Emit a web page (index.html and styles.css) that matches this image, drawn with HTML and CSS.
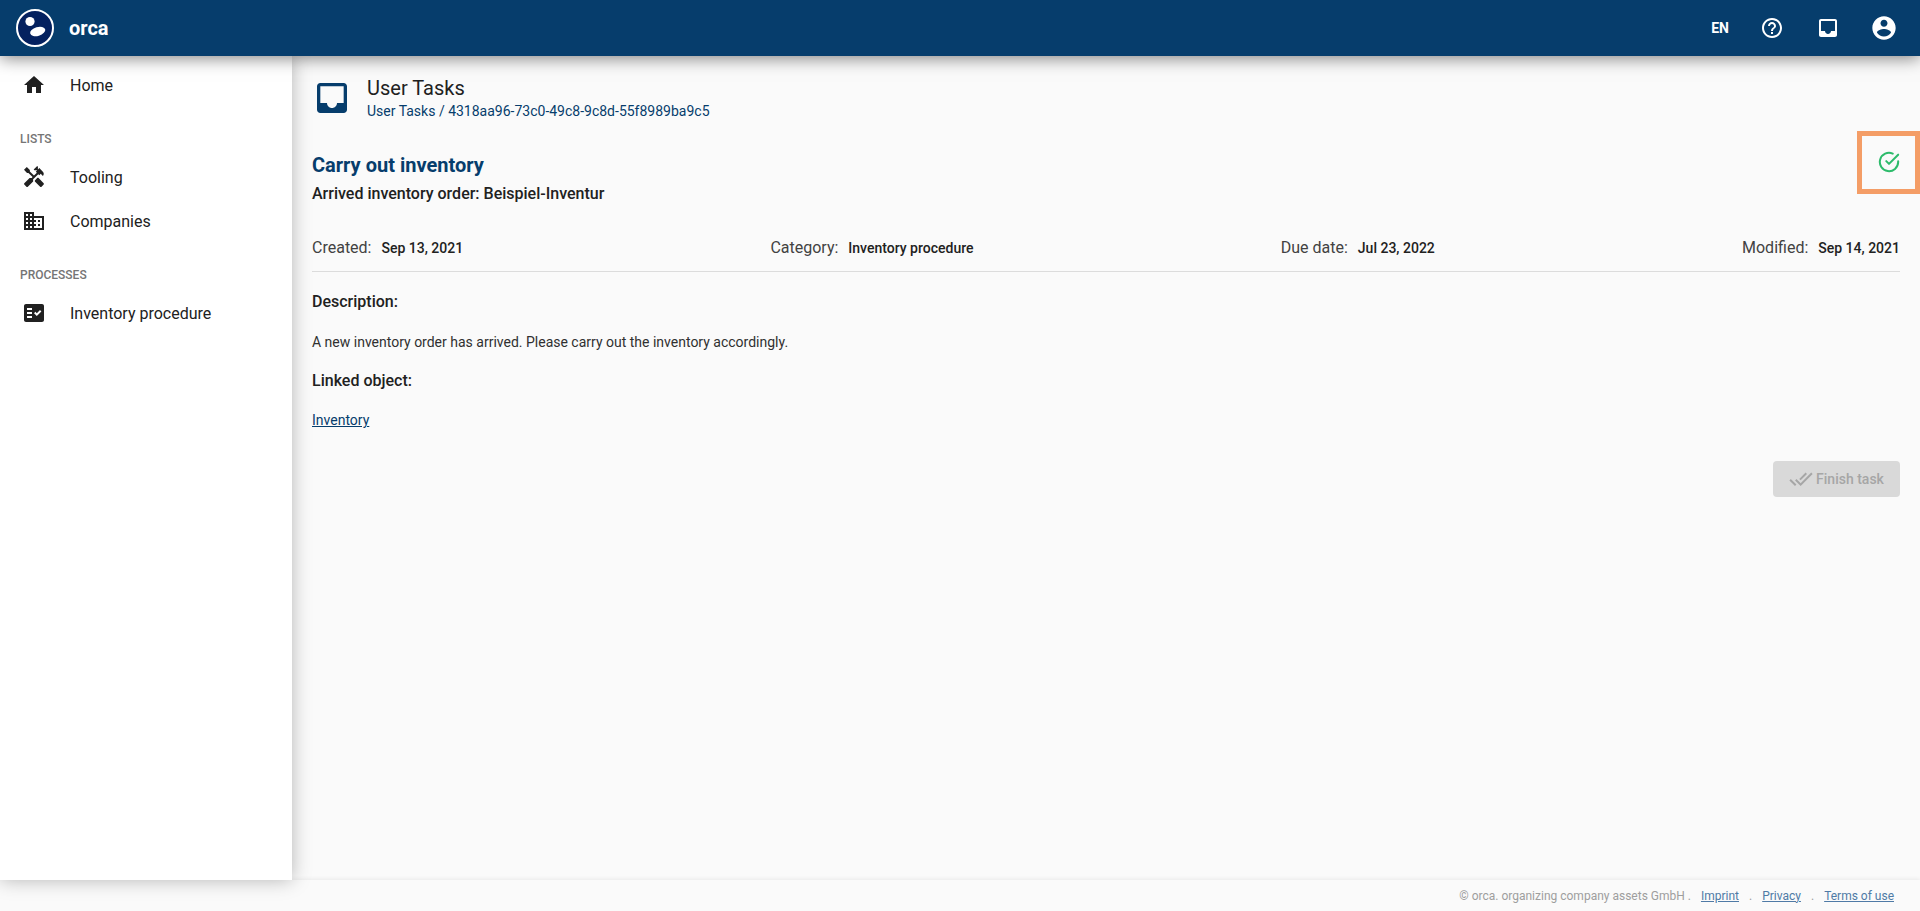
FILE: index.html
```html
<!DOCTYPE html>
<html lang="en">
<head>
<meta charset="utf-8">
<title>orca</title>
<link rel="stylesheet" href="styles.css">
</head>
<body>
<header class="topbar">
  <div class="brand">
    <svg class="logo" viewBox="0 0 38 38"><circle cx="19" cy="19" r="18" fill="#04215f" stroke="#fff" stroke-width="2"/><circle cx="14" cy="12.500" r="4.600" fill="#fff"/><ellipse cx="21.700" cy="22.400" rx="7.800" ry="4.400" transform="rotate(-16 21.700 22.400)" fill="#fff"/></svg>
    <span class="brand-name">orca</span>
  </div>
  <div class="top-actions">
    <span class="lang">EN</span>
    <svg class="top-icon" viewBox="0 0 24 24"><path d="M11 18h2v-2h-2v2zm1-16C6.480 2 2 6.480 2 12s4.480 10 10 10 10-4.480 10-10S17.520 2 12 2zm0 18c-4.410 0-8-3.590-8-8s3.590-8 8-8 8 3.590 8 8-3.590 8-8 8zm0-14c-2.210 0-4 1.790-4 4h2c0-1.100.9-2 2-2s2 .9 2 2c0 2-3 1.750-3 5h2c0-2.250 3-2.500 3-5 0-2.210-1.790-4-4-4z"/></svg>
    <svg class="top-icon" viewBox="0 0 24 24"><path d="M19 3H4.990c-1.110 0-1.980.89-1.980 2L3 19c0 1.100.88 2 1.990 2H19c1.100 0 2-.9 2-2V5c0-1.110-.9-2-2-2zm0 12h-4c0 1.660-1.350 3-3 3s-3-1.340-3-3H4.990V5H19v10z"/></svg>
    <svg class="top-icon top-icon-account" viewBox="0 0 24 24"><path d="M12 2C6.480 2 2 6.480 2 12s4.480 10 10 10 10-4.480 10-10S17.520 2 12 2zm0 3c1.660 0 3 1.340 3 3s-1.340 3-3 3-3-1.340-3-3 1.340-3 3-3zm0 14.200c-2.500 0-4.710-1.280-6-3.220.03-1.990 4-3.080 6-3.080 1.990 0 5.970 1.090 6 3.080-1.290 1.940-3.500 3.220-6 3.220z"/></svg>
  </div>
</header>

<div class="shell">
  <nav class="sidebar">
    <a class="nav-item nav-home">
      <svg class="nav-icon" viewBox="0 0 24 24"><path d="M10 20v-6h4v6h5v-8h3L12 3 2 12h3v8z"/></svg>
      <span>Home</span>
    </a>
    <div class="nav-label">LISTS</div>
    <a class="nav-item">
      <svg class="nav-icon" viewBox="0 0 24 24"><path d="M21.670 18.170l-5.300-5.300h-.99l-2.540 2.540v.99l5.300 5.300c.39.39 1.020.39 1.410 0l2.120-2.120c.39-.38.39-1.020 0-1.410z"/><path d="M17.340 10.190l1.410-1.410 2.120 2.120c1.170-1.170 1.170-3.070 0-4.240l-3.540-3.540-1.410 1.410V1.710l-.7-.71-3.540 3.540.71.71h2.830l-1.410 1.410 1.060 1.060-2.890 2.890-4.130-4.130V5.060L4.830 2.040 2 4.870 5.030 7.900h1.410l4.130 4.130-.85.85H7.600l-5.300 5.300c-.39.39-.39 1.020 0 1.410l2.120 2.120c.39.39 1.020.39 1.410 0l5.300-5.300v-2.120l5.150-5.150 1.060 1.050z"/></svg>
      <span>Tooling</span>
    </a>
    <a class="nav-item">
      <svg class="nav-icon" viewBox="0 0 24 24"><path d="M12 7V3H2v18h20V7H12zM6 19H4v-2h2v2zm0-4H4v-2h2v2zm0-4H4V9h2v2zm0-4H4V5h2v2zm4 12H8v-2h2v2zm0-4H8v-2h2v2zm0-4H8V9h2v2zm0-4H8V5h2v2zm10 12h-8v-2h2v-2h-2v-2h2v-2h-2V9h8v10zm-2-8h-2v2h2v-2zm0 4h-2v2h2v-2z"/></svg>
      <span>Companies</span>
    </a>
    <div class="nav-label">PROCESSES</div>
    <a class="nav-item">
      <svg class="nav-icon" viewBox="0 0 24 24"><path fill-rule="evenodd" d="M20 3H4c-1.100 0-2 .9-2 2v14c0 1.100.9 2 2 2h16c1.100 0 2-.9 2-2V5c0-1.100-.9-2-2-2zM10 17H5v-2h5v2zm0-4H5v-2h5v2zm0-4H5V7h5v2zm4.820 6L12 12.160l1.410-1.410 1.410 1.420L17.990 9l1.420 1.420L14.820 15z"/></svg>
      <span>Inventory procedure</span>
    </a>
  </nav>

  <main class="content">
    <div class="page-head">
      <svg class="page-icon" viewBox="0 0 24 24"><path d="M19 3H4.990c-1.110 0-1.980.89-1.980 2L3 19c0 1.100.88 2 1.990 2H19c1.100 0 2-.9 2-2V5c0-1.110-.9-2-2-2zm0 12h-4c0 1.660-1.350 3-3 3s-3-1.340-3-3H4.990V5H19v10z"/></svg>
      <div class="page-titles">
        <div class="page-title">User Tasks</div>
        <div class="crumbs">User Tasks / 4318aa96-73c0-49c8-9c8d-55f8989ba9c5</div>
      </div>
    </div>

    <div class="task-head">
      <div class="task-text">
        <h1 class="task-title">Carry out inventory</h1>
        <div class="task-sub">Arrived inventory order: Beispiel-Inventur</div>
      </div>
      <div class="status-box">
        <svg class="status-icon" viewBox="0 0 24 24"><path d="M22 11.080V12a10 10 0 1 1-5.930-9.140"/><path d="M22 4 12 14.010l-3-3"/></svg>
      </div>
    </div>

    <div class="meta">
      <div class="meta-item"><span class="meta-key">Created:</span><span class="meta-val">Sep 13, 2021</span></div>
      <div class="meta-item"><span class="meta-key">Category:</span><span class="meta-val">Inventory procedure</span></div>
      <div class="meta-item"><span class="meta-key">Due date:</span><span class="meta-val">Jul 23, 2022</span></div>
      <div class="meta-item"><span class="meta-key">Modified:</span><span class="meta-val">Sep 14, 2021</span></div>
    </div>

    <h2 class="section-title section-desc">Description:</h2>
    <p class="section-text">A new inventory order has arrived. Please carry out the inventory accordingly.</p>
    <h2 class="section-title section-link">Linked object:</h2>
    <a class="object-link">Inventory</a>

    <div class="actions">
      <button class="finish" disabled>
        <svg class="finish-icon" viewBox="0 0 24 24"><path d="M18 7l-1.410-1.410-6.340 6.340 1.410 1.410L18 7zm4.240-1.410L11.660 16.170 7.480 12l-1.410 1.410L11.660 19l12-12-1.420-1.410zM.41 13.410L6 19l1.410-1.410L1.830 12 .41 13.410z"/></svg>
        <span>Finish task</span>
      </button>
    </div>
  </main>
</div>

<footer class="footer">
  <span>© orca. organizing company assets GmbH .</span>
  <a>Imprint</a><span>.</span>
  <a>Privacy</a><span>.</span>
  <a>Terms of use</a>
</footer>
</body>
</html>
```
FILE: styles.css
```css
* { box-sizing: border-box; }
html, body { height: 100%; }
body {
  margin: 0;
  height: 911px;
  overflow: hidden;
  display: flex;
  flex-direction: column;
  background: #fafafa;
  color: #212121;
  font-family: Roboto, "Liberation Sans", sans-serif;
}

.topbar {
  position: relative;
  z-index: 3;
  flex: none;
  height: 56px;
  padding: 0 22px 0 16px;
  display: flex;
  align-items: center;
  justify-content: space-between;
  background: #063d6c;
  color: #fff;
  box-shadow: 0 2px 16px rgba(0,0,0,.5);
}
.brand { display: flex; align-items: center; gap: 15px; }
.logo { width: 38px; height: 38px; display: block; }
.brand-name { font-size: 20px; font-weight: 700; }
.top-actions { display: flex; align-items: center; gap: 32px; }
.lang { font-size: 14px; font-weight: 700; margin-right: -1px; }
.top-icon { width: 24px; height: 24px; fill: #fff; display: block; }
.top-icon-account { width: 28px; height: 28px; margin-left: -2px; }

.shell { flex: 1; display: flex; min-height: 0; }

.sidebar {
  position: relative;
  z-index: 2;
  flex: none;
  width: 292px;
  padding-top: 12px;
  background: #fff;
  box-shadow: 0 0 18px rgba(0,0,0,.28);
}
.nav-item {
  height: 34px;
  margin-bottom: 10px;
  padding-left: 22px;
  display: flex;
  align-items: center;
  gap: 24px;
  font-size: 16px;
  color: #212121;
}
.nav-icon { width: 24px; height: 24px; fill: #212121; flex: none; }
.nav-label {
  margin-top: 30px;
  margin-bottom: 14px;
  padding-left: 20px;
  font-size: 12px;
  font-weight: 500;
  line-height: 14px;
  color: #757575;
}

.content { flex: 1; min-width: 0; padding: 22px 20px 0; }

.page-head { display: flex; align-items: center; gap: 15px; height: 40px; }
.page-icon { width: 40px; height: 40px; fill: #063d6c; flex: none; }
.page-title { font-size: 20px; line-height: 22px; }
.crumbs { margin-top: 3px; font-size: 14px; line-height: 18px; color: #063d6c; }

.task-head {
  margin-top: 13px;
  display: flex;
  justify-content: space-between;
  align-items: flex-start;
}
.task-text { padding-top: 22px; }
.task-title {
  margin: 0;
  font-size: 20px;
  font-weight: 700;
  line-height: 24px;
  color: #063d6c;
}
.task-sub { margin-top: 5px; font-size: 16px; font-weight: 500; line-height: 24px; }
.status-box {
  width: 63px;
  height: 63px;
  margin-right: -20px;
  padding-bottom: 1px;
  border: 5px solid #f49d66;
  display: flex;
  align-items: center;
  justify-content: center;
}
.status-icon {
  width: 22px;
  height: 22px;
  fill: none;
  stroke: #2dbb6b;
  stroke-width: 2.2;
  stroke-linecap: round;
  stroke-linejoin: round;
}

.meta {
  margin-top: 17px;
  height: 49px;
  display: flex;
  justify-content: space-between;
  align-items: center;
  border-bottom: 1px solid #dcdcdc;
}
.meta-item { display: flex; align-items: baseline; gap: 10px; }
.meta-key { font-size: 16px; color: #424242; }
.meta-val { font-size: 14px; font-weight: 500; }

.section-title { margin: 0; font-size: 16px; font-weight: 500; line-height: 24px; }
.section-desc { margin-top: 18px; }
.section-text { margin: 18px 0 0; font-size: 14px; line-height: 20px; color: #303030; }
.section-link { margin-top: 17px; }
.object-link {
  display: block;
  width: fit-content;
  margin-top: 17px;
  font-size: 14px;
  line-height: 20px;
  color: #063d6c;
  text-decoration: underline;
}

.actions { margin-top: 31px; display: flex; justify-content: flex-end; }
.finish {
  width: 127px;
  height: 36px;
  padding: 0;
  border: 0;
  border-radius: 4px;
  background: #d9d9d9;
  color: #a6a6a6;
  font: 500 14px Roboto, "Liberation Sans", sans-serif;
  display: flex;
  align-items: center;
  justify-content: center;
  gap: 3px;
}
.finish-icon { width: 24px; height: 24px; fill: #a6a6a6; }

.footer {
  position: relative;
  z-index: 1;
  flex: none;
  height: 31px;
  padding-right: 26px;
  display: flex;
  align-items: center;
  justify-content: flex-end;
  gap: 10px;
  background: #fafafa;
  box-shadow: 0 -1px 4px rgba(0,0,0,.07);
  font-size: 12px;
  color: #9e9e9e;
}
.footer a { color: #4f7aa6; text-decoration: underline; }
```
